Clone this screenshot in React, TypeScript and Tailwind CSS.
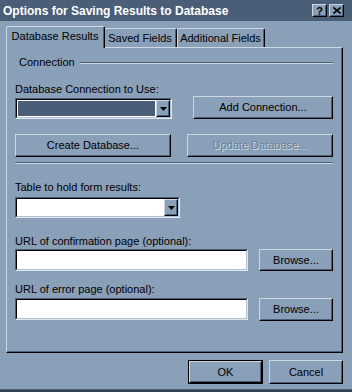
import React from 'react';

function Arrow() {
  return (
    <svg width="7" height="4" viewBox="0 0 7 4" className="block">
      <path d="M0 0h7L3.5 4z" fill="#000" />
    </svg>
  );
}

function Button({
  label,
  className = '',
  disabled = false,
  isDefault = false,
}: {
  label: string;
  className?: string;
  disabled?: boolean;
  isDefault?: boolean;
}) {
  const inner = (
    <div className="flex flex-1 border border-t-[#cdd7e2] border-l-[#cdd7e2] border-r-black border-b-black">
      <div className="flex flex-1 items-center justify-center border border-t-transparent border-l-transparent border-r-[#4a5e78] border-b-[#4a5e78]">
        <span
          className={
            disabled
              ? 'text-[#6a7f97] [text-shadow:1px_1px_0_#d3dce6]'
              : 'text-black'
          }
        >
          {label}
        </span>
      </div>
    </div>
  );
  return (
    <div className={isDefault ? `flex border border-black ${className}` : `flex ${className}`}>
      {inner}
    </div>
  );
}

function Sunken({ className = '', children }: { className?: string; children?: React.ReactNode }) {
  return (
    <div
      className={`flex border border-t-[#4a5e78] border-l-[#4a5e78] border-r-[#dfe6ee] border-b-[#dfe6ee] ${className}`}
    >
      <div className="flex flex-1 border border-t-black border-l-black border-r-[#b3c1d0] border-b-[#b3c1d0]">
        {children}
      </div>
    </div>
  );
}

function DropButton() {
  return (
    <div className="flex w-[14px] border border-t-[#cdd7e2] border-l-[#cdd7e2] border-r-black border-b-black bg-[#8a9fb8]">
      <div className="flex flex-1 items-center justify-center border border-t-transparent border-l-transparent border-r-[#4a5e78] border-b-[#4a5e78]">
        <Arrow />
      </div>
    </div>
  );
}

function Label({ text, className = '' }: { text: string; className?: string }) {
  return <div className={`h-[13px] whitespace-nowrap ${className}`}>{text}</div>;
}

export default function App() {
  return (
    <div className="flex h-[392px] w-[352px] flex-col bg-[#8a9fb8] font-['Liberation_Sans',Arial,sans-serif] text-[11px] leading-[13px] text-black">
      {/* Title bar */}
      <div className="flex h-[21px] items-center bg-[#4a5e78] pl-[3px] pr-[8px]">
        <div className="flex-1 whitespace-nowrap text-[12px] font-bold leading-[14px] text-white">
          Options for Saving Results to Database
        </div>
        <div className="flex gap-[2px]">
          <div className="flex h-[13px] w-[15px] border border-t-[#cdd7e2] border-l-[#cdd7e2] border-r-black border-b-black bg-[#8a9fb8]">
            <div className="flex flex-1 items-center justify-center border border-t-transparent border-l-transparent border-r-[#4a5e78] border-b-[#4a5e78] text-[11px] font-bold leading-[10px]">
              ?
            </div>
          </div>
          <div className="flex h-[13px] w-[15px] border border-t-[#cdd7e2] border-l-[#cdd7e2] border-r-black border-b-black bg-[#8a9fb8]">
            <div className="flex flex-1 items-center justify-center border border-t-transparent border-l-transparent border-r-[#4a5e78] border-b-[#4a5e78]">
              <svg width="8" height="7" viewBox="0 0 8 7">
                <path d="M0.5 0.5L7.5 6.5M7.5 0.5L0.5 6.5" stroke="#000" strokeWidth="1.6" />
              </svg>
            </div>
          </div>
        </div>
      </div>

      {/* Tabs */}
      <div className="ml-[6px] mt-[5px] flex h-[21px] items-end">
        <div className="relative z-10 -mb-px flex h-[22px] w-[99px] rounded-t-[2px] border-l border-t border-r border-l-[#cdd7e2] border-t-[#cdd7e2] border-r-black bg-[#8a9fb8]">
          <div className="flex flex-1 items-center justify-center border-r border-r-[#4a5e78] pb-[2px]">
            Database Results
          </div>
        </div>
        <div className="flex h-[19px] w-[72px] rounded-tr-[2px] border-t border-r border-t-[#cdd7e2] border-r-black">
          <div className="flex flex-1 items-center justify-center border-r border-r-[#4a5e78]">
            Saved Fields
          </div>
        </div>
        <div className="flex h-[19px] w-[88px] rounded-t-[2px] border-l border-t border-r border-l-[#cdd7e2] border-t-[#cdd7e2] border-r-black">
          <div className="flex flex-1 items-center justify-center border-r border-r-[#4a5e78]">
            Additional Fields
          </div>
        </div>
      </div>

      {/* Panel */}
      <div className="ml-[6px] flex h-[306px] w-[337px] border border-l-[#cdd7e2] border-t-[#cdd7e2] border-r-black border-b-black">
        <div className="flex flex-1 flex-col border-r border-b border-r-[#4a5e78] border-b-[#4a5e78] pl-[8px] pr-[8px]">
          {/* Group header */}
          <div className="mt-[8px] flex h-[13px] items-center">
            <span className="ml-[4px] whitespace-nowrap">Connection</span>
            <div className="ml-[5px] h-[2px] flex-1 border-t border-b border-t-[#4a5e78] border-b-[#cdd7e2]" />
          </div>

          {/* Row 1 */}
          <div className="mt-[14px] flex items-end justify-between">
            <div className="flex flex-col">
              <Label text="Database Connection to Use:" />
              <Sunken className="mt-[2px] h-[21px] w-[157px]">
                <div className="flex-1 border border-white bg-[#4a5e78]" />
                <DropButton />
              </Sunken>
            </div>
            <Button label="Add Connection..." className="h-[23px] w-[140px]" />
          </div>

          {/* Row 2 */}
          <div className="mt-[15px] flex justify-between">
            <Button label="Create Database..." className="h-[23px] w-[156px]" />
            <Button label="Update Database..." disabled className="h-[23px] w-[146px]" />
          </div>

          {/* Separator */}
          <div className="mt-[5px] h-[2px] border-t border-b border-t-[#4a5e78] border-b-[#cdd7e2]" />

          <Label text="Table to hold form results:" className="mt-[17px]" />
          <Sunken className="mt-[3px] h-[21px] w-[165px]">
            <div className="flex-1 bg-white" />
            <DropButton />
          </Sunken>

          <Label text="URL of confirmation page (optional):" className="mt-[17px]" />
          <div className="mt-[1px] flex justify-between">
            <Sunken className="h-[22px] w-[233px]">
              <div className="flex-1 bg-white" />
            </Sunken>
            <Button label="Browse..." className="h-[22px] w-[74px]" />
          </div>

          <Label text="URL of error page (optional):" className="mt-[12px]" />
          <div className="mt-[2px] flex justify-between">
            <Sunken className="h-[22px] w-[233px]">
              <div className="flex-1 bg-white" />
            </Sunken>
            <Button label="Browse..." className="h-[23px] w-[74px]" />
          </div>
        </div>
      </div>

      {/* Footer */}
      <div className="mt-[7px] flex justify-end gap-[6px] pr-[9px]">
        <Button label="OK" isDefault className="h-[24px] w-[75px]" />
        <Button label="Cancel" className="h-[24px] w-[74px]" />
      </div>

      <div className="mt-auto h-[3px] border-t border-t-[#4a5e78] bg-[#33414f]" />
    </div>
  );
}
